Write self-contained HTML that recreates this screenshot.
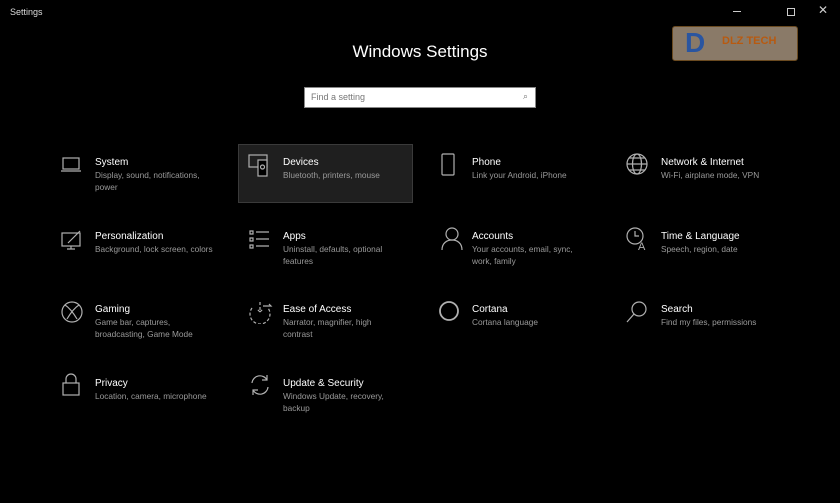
<!DOCTYPE html>
<html><head><style>
body{margin:0;width:840px;height:503px;background:#000;font-family:"Liberation Sans",sans-serif;color:#fff;position:relative;overflow:hidden}
.a{position:absolute}
.t{font-size:10px;color:#fff;white-space:nowrap}
.d{font-size:8.3px;color:#9a9a9a;line-height:11.5px;margin-top:2px}
svg{position:absolute;stroke:#b0b0b0;fill:none;stroke-width:1.2}
</style></head><body>
<div class="a" style="left:10px;top:7px;font-size:9px;color:#ddd">Settings</div>
<div class="a" style="left:733px;top:11px;width:8px;height:1px;background:#ccc"></div>
<div class="a" style="left:787px;top:8px;width:6px;height:6px;border:1px solid #ccc"></div>
<div class="a" style="left:818px;top:3px;font-size:12px;color:#ccc">✕</div>
<div class="a" style="left:672px;top:26px;width:124px;height:33px;background:#8a7a68;border-radius:3px;border:1px solid #6a4a20"></div>
<div class="a" style="left:685px;top:27px;font-size:28px;font-weight:bold;color:#2a55a0">D</div>
<div class="a" style="left:722px;top:35px;font-size:11px;font-weight:bold;color:#b85a10">DLZ TECH</div>
<div class="a" style="left:0;top:42px;width:840px;text-align:center;font-size:17px;color:#fff">Windows Settings</div>
<div class="a" style="left:304px;top:87px;width:230px;height:19px;background:#fff;border:1px solid #888"></div>
<div class="a" style="left:311px;top:92px;font-size:9px;color:#777">Find a setting</div>
<div class="a" style="left:523px;top:91px;font-size:9px;color:#777">⌕</div>
<div class="a" style="left:238px;top:144px;width:173px;height:57px;background:#1f1f1f;border:1px solid #3a3a3a"></div>

<div class="a" style="left:95px;top:157px"><div class="t">System</div><div class="d">Display, sound, notifications,<br>power</div></div>
<div class="a" style="left:283px;top:157px"><div class="t">Devices</div><div class="d">Bluetooth, printers, mouse</div></div>
<div class="a" style="left:472px;top:157px"><div class="t">Phone</div><div class="d">Link your Android, iPhone</div></div>
<div class="a" style="left:661px;top:157px"><div class="t">Network &amp; Internet</div><div class="d">Wi-Fi, airplane mode, VPN</div></div>

<div class="a" style="left:95px;top:231px"><div class="t">Personalization</div><div class="d">Background, lock screen, colors</div></div>
<div class="a" style="left:283px;top:231px"><div class="t">Apps</div><div class="d">Uninstall, defaults, optional<br>features</div></div>
<div class="a" style="left:472px;top:231px"><div class="t">Accounts</div><div class="d">Your accounts, email, sync,<br>work, family</div></div>
<div class="a" style="left:661px;top:231px"><div class="t">Time &amp; Language</div><div class="d">Speech, region, date</div></div>

<div class="a" style="left:95px;top:304px"><div class="t">Gaming</div><div class="d">Game bar, captures,<br>broadcasting, Game Mode</div></div>
<div class="a" style="left:283px;top:304px"><div class="t">Ease of Access</div><div class="d">Narrator, magnifier, high<br>contrast</div></div>
<div class="a" style="left:472px;top:304px"><div class="t">Cortana</div><div class="d">Cortana language</div></div>
<div class="a" style="left:661px;top:304px"><div class="t">Search</div><div class="d">Find my files, permissions</div></div>

<div class="a" style="left:95px;top:378px"><div class="t">Privacy</div><div class="d">Location, camera, microphone</div></div>
<div class="a" style="left:283px;top:378px"><div class="t">Update &amp; Security</div><div class="d">Windows Update, recovery,<br>backup</div></div>

<svg style="left:60px;top:155px" width="22" height="20"><rect x="3" y="3" width="16" height="11"/><path d="M1 16h20"/></svg>
<svg style="left:248px;top:153px" width="24" height="24"><rect x="1" y="2" width="18" height="12"/><rect x="10" y="7" width="9" height="16" fill="#000"/><circle cx="14.5" cy="14" r="2"/></svg>
<svg style="left:440px;top:153px" width="16" height="24"><rect x="2" y="1" width="12" height="21" rx="1"/></svg>
<svg style="left:625px;top:152px" width="24" height="24"><circle cx="12" cy="12" r="10"/><ellipse cx="12" cy="12" rx="4.5" ry="10"/><path d="M2 12h20M4 6h16M4 18h16"/></svg>

<svg style="left:60px;top:229px" width="24" height="22"><rect x="2" y="4" width="18" height="13"/><path d="M11 17v3M7 20h8M8 14l12-12"/></svg>
<svg style="left:248px;top:228px" width="24" height="24"><path d="M2 3h3v3H2zM2 10h3v3H2zM2 17h3v3H2zM8 4h13M8 11h13M8 18h13"/></svg>
<svg style="left:440px;top:226px" width="24" height="26"><circle cx="12" cy="8" r="6"/><path d="M2 24c0-7 5-10 10-10s10 3 10 10"/></svg>
<svg style="left:625px;top:226px" width="26" height="26"><circle cx="10" cy="10" r="8"/><path d="M10 5v5h4"/><text x="13" y="24" font-size="11" fill="#b0b0b0" stroke="none">A</text></svg>

<svg style="left:60px;top:300px" width="24" height="24"><circle cx="12" cy="12" r="10"/><path d="M5 5c5 3 9 9 12 14M19 5c-5 3-9 9-12 14"/></svg>
<svg style="left:248px;top:300px" width="26" height="24"><path d="M12 2v10l-3-3M12 12l3-3M4 8a10 10 0 1 0 16 0" stroke-dasharray="3 2"/><path d="M15 6h8l-2-2"/></svg>
<svg style="left:438px;top:300px" width="22" height="22"><circle cx="11" cy="11" r="9" stroke-width="1.8"/></svg>
<svg style="left:625px;top:300px" width="24" height="24"><circle cx="14" cy="9" r="7"/><path d="M9 14L2 22"/></svg>

<svg style="left:60px;top:373px" width="22" height="24"><path d="M6 10V6a5 5 0 0 1 10 0v4"/><rect x="3" y="10" width="16" height="12"/></svg>
<svg style="left:248px;top:373px" width="24" height="24"><path d="M4 10a8 8 0 0 1 15-3M20 14a8 8 0 0 1-15 3M19 2v5h-5M5 22v-5h5"/></svg>
</body></html>
